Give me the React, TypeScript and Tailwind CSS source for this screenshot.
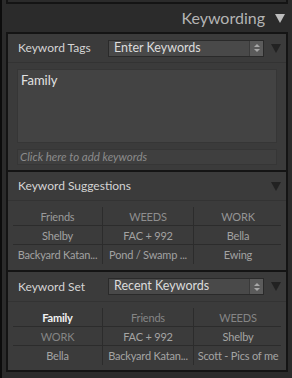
import React from "react"

const font = { fontFamily: "Lato, 'Open Sans', 'Liberation Sans', sans-serif" }

function Triangle({ light = false }: { light?: boolean }) {
  return (
    <svg width="10" height="9" viewBox="0 0 10 9">
      <path d="M0 0 L10 0 L5 9 Z" fill={light ? "#bdbdbd" : "#222222"} />
    </svg>
  )
}

function Select({ label }: { label: string }) {
  return (
    <div className="ml-auto flex h-[17px] w-[156px] items-center border border-[#2a2a2a] bg-[#494949]">
      <span className="flex-1 pl-[5px] text-[12.5px] leading-none text-[#dcdcdc]">{label}</span>
      <div className="flex h-full w-[14px] flex-col items-center justify-center gap-[2px] border-l border-[#3a3a3a] bg-[#5b5b5b]">
        <svg width="6" height="3" viewBox="0 0 6 3">
          <path d="M0 3 L3 0 L6 3 Z" fill="#a8a8a8" />
        </svg>
        <svg width="6" height="3" viewBox="0 0 6 3">
          <path d="M0 0 L6 0 L3 3 Z" fill="#a8a8a8" />
        </svg>
      </div>
    </div>
  )
}

function KeywordGrid({ items, highlight }: { items: { text: string; tone: string }[]; highlight?: string }) {
  const rows = [items.slice(0, 3), items.slice(3, 6), items.slice(6, 9)]
  return (
    <div className="mx-[5px] flex flex-col">
      {rows.map((row, r) => (
        <div key={r} className={`grid h-[19px] grid-cols-[90px_91px_88px] ${r < 2 ? "border-b border-[#2c2c2c]" : ""}`}>
          {row.map((item, c) => (
            <div
              key={c}
              className={`flex items-center justify-center overflow-hidden text-[11px] tracking-[-0.2px] leading-none whitespace-nowrap ${c < 2 ? "border-r border-[#2c2c2c]" : ""}`}
              style={{ color: item.text === highlight ? "#f2f2f2" : item.tone, fontWeight: item.text === highlight ? 700 : 400 }}
            >
              {item.text}
            </div>
          ))}
        </div>
      ))}
    </div>
  )
}

export default function App() {
  const suggestions = [
    { text: "Friends", tone: "#9a9a9a" },
    { text: "WEEDS", tone: "#8e8e8e" },
    { text: "WORK", tone: "#959595" },
    { text: "Shelby", tone: "#a2a2a2" },
    { text: "FAC + 992", tone: "#a2a2a2" },
    { text: "Bella", tone: "#a2a2a2" },
    { text: "Backyard Katan...", tone: "#a2a2a2" },
    { text: "Pond / Swamp ...", tone: "#a2a2a2" },
    { text: "Ewing", tone: "#a2a2a2" },
  ]
  const recent = [
    { text: "Family", tone: "#f2f2f2" },
    { text: "Friends", tone: "#858585" },
    { text: "WEEDS", tone: "#858585" },
    { text: "WORK", tone: "#858585" },
    { text: "FAC + 992", tone: "#a4a4a4" },
    { text: "Shelby", tone: "#a4a4a4" },
    { text: "Bella", tone: "#a4a4a4" },
    { text: "Backyard Katan...", tone: "#a4a4a4" },
    { text: "Scott - Pics of me", tone: "#a4a4a4" },
  ]

  return (
    <div className="flex h-[378px] w-[292px] overflow-hidden bg-[#2b2b2b]" style={font}>
      <div className="w-[2px] bg-[#0c0c0c]" />
      <div className="ml-[4px] flex w-[282px] flex-col">
        {/* previous panel bottom */}
        <div className="h-[4px] border-x-2 border-b-2 border-[#141414] bg-[#2b2b2b]" />

        {/* section header */}
        <div className="flex h-[28px] items-center justify-end gap-[10px] pr-[3px]">
          <span className="text-[16px] leading-none text-[#b4b4b4]">Keywording</span>
          <Triangle light />
        </div>

        <div className="flex flex-col border-2 border-[#141414] bg-[#3b3b3b]">
          {/* Keyword Tags */}
          <div className="flex h-[29px] items-center border-b border-[#333333] pl-[10px] pr-[5px]">
            <span className="text-[12px] leading-none text-[#d4d4d4]">Keyword Tags</span>
            <Select label="Enter Keywords" />
            <div className="ml-[7px]">
              <Triangle />
            </div>
          </div>
          <div className="flex flex-col gap-[6px] px-[9px] pt-[6px] pb-[5px]">
            <div className="h-[74px] border border-[#363636] bg-[#434343] px-[3px] pt-[4px] leading-none">
              <span className="block text-[13px] leading-none text-[#e2e2e2]">Family</span>
            </div>
            <div className="flex h-[16px] items-center border border-[#363636] bg-[#3f3f3f] px-[2px]">
              <span className="text-[11.5px] italic leading-none text-[#8c8c8c]">Click here to add keywords</span>
            </div>
          </div>

          {/* Keyword Suggestions */}
          <div className="border-t-2 border-[#141414]">
            <div className="flex h-[29px] items-center border-b border-[#333333] pl-[10px] pr-[5px]">
              <span className="text-[12px] leading-none text-[#d4d4d4]">Keyword Suggestions</span>
              <div className="ml-auto">
                <Triangle />
              </div>
            </div>
            <div className="pt-[6px] pb-[6px]">
              <KeywordGrid items={suggestions} />
            </div>
          </div>

          {/* Keyword Set */}
          <div className="border-t-2 border-[#141414]">
            <div className="flex h-[30px] items-center border-b border-[#333333] pl-[10px] pr-[5px]">
              <span className="text-[12px] leading-none text-[#d4d4d4]">Keyword Set</span>
              <Select label="Recent Keywords" />
              <div className="ml-[7px]">
                <Triangle />
              </div>
            </div>
            <div className="pt-[6px] pb-[5px]">
              <KeywordGrid items={recent} highlight="Family" />
            </div>
          </div>
        </div>
      </div>
    </div>
  )
}
